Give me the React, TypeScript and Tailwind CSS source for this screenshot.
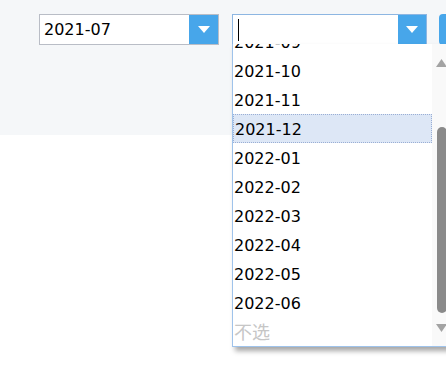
import React from 'react';

const months = ['2021-09', '2021-10', '2021-11', '2021-12', '2022-01', '2022-02', '2022-03', '2022-04', '2022-05', '2022-06'];

const Caret = () => (
  <svg width="12" height="7" viewBox="0 0 12 7">
    <path d="M0 0 L12 0 L6 7 Z" fill="#fff" />
  </svg>
);

export default function App() {
  const font = { fontFamily: '"DejaVu Sans", Verdana, "Noto Sans CJK SC", sans-serif' };

  return (
    <div className="relative w-[446px] h-[383px] overflow-hidden bg-white" style={font}>
      <div className="h-[135px] bg-[#f5f7f9] flex items-start pt-[14px] pl-[39px]">
        {/* month picker 1 */}
        <div className="shrink-0 flex w-[180px] h-[31px] border border-[#b9bdc6] bg-white">
          <div className="flex-1 flex items-center pl-[4px] pt-[1px] text-[16px] text-black">2021-07</div>
          <div className="w-[29px] bg-[#47a6ea] flex items-center justify-center">
            <Caret />
          </div>
        </div>

        {/* month picker 2, open */}
        <div className="relative shrink-0 ml-[13px] flex w-[195px] h-[31px] border border-[#8db6e2] bg-white">
          <div className="flex-1 flex items-center pl-[5px]">
            <div className="w-px h-[22px] bg-black" />
          </div>
          <div className="w-[28px] bg-[#47a6ea] flex items-center justify-center">
            <Caret />
          </div>

          <div className="absolute left-[-1px] top-full w-[218px] h-[303px] flex bg-white border-l border-r border-b border-[#9fc3eb] shadow-[3px_4px_5px_rgba(0,0,0,0.35)]">
            <div className="w-[199px] shrink-0 overflow-hidden">
              <div className="-mt-[17px]">
                {months.map((m) => (
                  <div
                    key={m}
                    className={
                      'h-[29px] flex items-center pl-[1px] pt-[3px] text-[16px] text-black ' +
                      (m === '2021-12' ? 'bg-[#dde7f6] border border-dotted border-[#9aaed4]' : '')
                    }
                  >
                    {m}
                  </div>
                ))}
                <div className="h-[29px] flex items-center pl-[1px] pt-[1px] text-[18px] text-[#c6c6c6]">不选</div>
              </div>
            </div>
            {/* scrollbar */}
            <div className="w-[17px] shrink-0 bg-[#f9f9f9] flex flex-col items-start pl-[4px]">
              <svg className="mt-[15px]" width="11" height="8" viewBox="0 0 11 8">
                <path d="M5.5 0 L11 8 L0 8 Z" fill="#a3a3a3" />
              </svg>
              <div className="mt-[60px] ml-[1px] w-[10px] h-[186px] rounded-[5px] bg-[#8a8a8a]" />
              <svg className="mt-[11px]" width="11" height="8" viewBox="0 0 11 8">
                <path d="M0 0 L11 0 L5.5 8 Z" fill="#a3a3a3" />
              </svg>
            </div>
          </div>
        </div>

        {/* month picker 3 (cut off) */}
        <div className="shrink-0 ml-[12px] w-[20px] h-[31px] rounded-tl-[4px] rounded-bl-[4px] bg-[#47a6ea]" />
      </div>
    </div>
  );
}
